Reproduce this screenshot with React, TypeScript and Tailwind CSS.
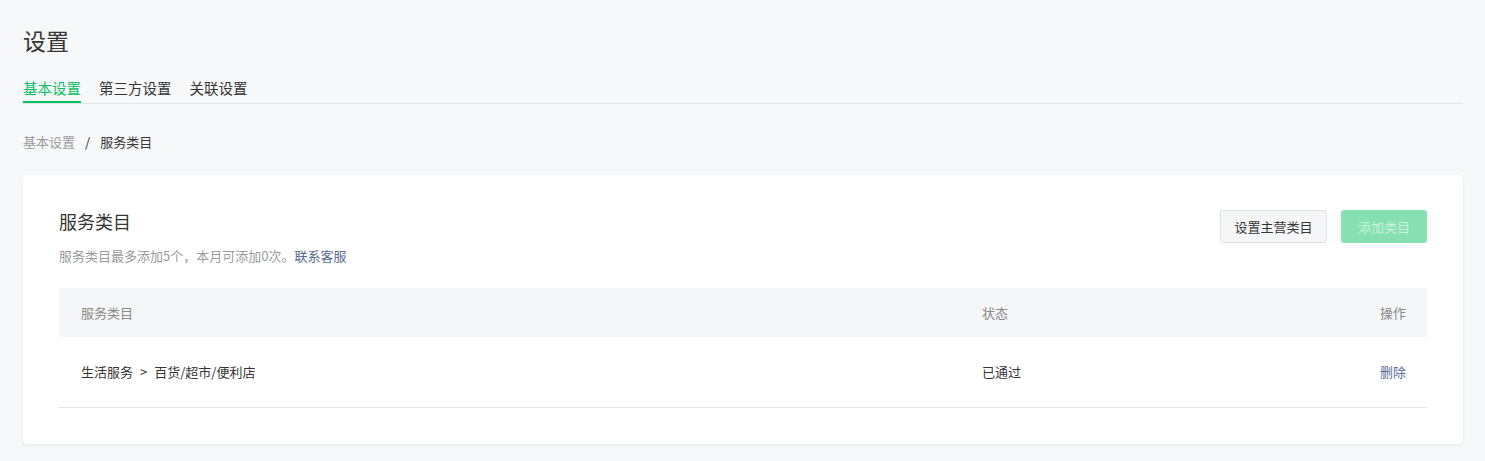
import React from "react";

export default function App() {
  const font = { fontFamily: '"Noto Sans CJK SC", "Noto Sans", sans-serif' };
  return (
    <div
      className="min-h-[461px] bg-[#f7f8fa] pl-[23px] pr-[22px] pt-[24px] pb-[18px] text-[#353535]"
      style={font}
    >
      <h1 className="text-[23px] leading-[32px] font-normal text-[#353535]">设置</h1>

      <div className="mt-[21px] flex gap-[18px] border-b border-[#e3e4e8]">
        <div className="border-b-2 border-[#07c160] pb-[2px] text-[14.5px] leading-[22px] text-[#07c160]">
          基本设置
        </div>
        <div className="border-b-2 border-transparent pb-[2px] text-[14.5px] leading-[22px] text-[#353535]">
          第三方设置
        </div>
        <div className="border-b-2 border-transparent pb-[2px] text-[14.5px] leading-[22px] text-[#353535]">
          关联设置
        </div>
      </div>

      <div className="mt-[28px] flex items-center text-[13px] leading-[20px]">
        <span className="text-[#9a9a9a]">基本设置</span>
        <span className="mx-[10px] text-[#353535]">/</span>
        <span className="text-[#353535]">服务类目</span>
      </div>

      <div className="mt-[23px] rounded-[4px] bg-white p-[36px] shadow-[0_1px_3px_rgba(0,0,0,0.08)]">
        <div className="flex items-start justify-between">
          <div>
            <div className="-mt-[2px] text-[18px] leading-[24px] text-[#353535]">服务类目</div>
            <div className="mt-[13px] text-[13px] leading-[20px] text-[#9a9a9a]">
              服务类目最多添加5个，本月可添加0次。
              <span className="text-[#576b95]">联系客服</span>
            </div>
          </div>
          <div className="-mt-px flex gap-[14px]">
            <button className="h-[33px] w-[107px] rounded-[3px] border border-[#e0e1e5] bg-[#f5f6f8] text-[13px] text-[#353535]">
              设置主营类目
            </button>
            <button className="h-[33px] w-[86px] rounded-[3px] bg-[#86e0b1] text-[13px] text-[#c8f1db]">
              添加类目
            </button>
          </div>
        </div>

        <div className="mt-[22px]">
          <div className="grid h-[49px] grid-cols-[901px_1fr_120px] items-center bg-[#f5f6f7] text-[13px] text-[#8a8a8a]">
            <div className="pl-[22px]">服务类目</div>
            <div className="pl-[22px]">状态</div>
            <div className="pr-[21px] text-right">操作</div>
          </div>
          <div className="grid h-[71px] grid-cols-[901px_1fr_120px] items-center border-b border-[#e5e5e5] text-[13px] text-[#353535]">
            <div className="pl-[22px]">
              生活服务<span className="mx-[7px]">&gt;</span>百货/超市/便利店
            </div>
            <div className="pl-[22px]">已通过</div>
            <div className="pr-[21px] text-right text-[#576b95]">删除</div>
          </div>
        </div>
      </div>
    </div>
  );
}
